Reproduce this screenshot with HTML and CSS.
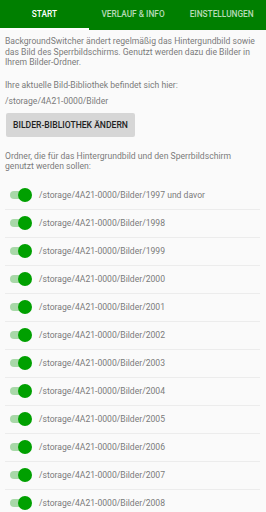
FILE: index.html
```html
<!DOCTYPE html>
<html lang="de">

<head>
    <meta charset="UTF-8" />
    <meta name="viewport" content="width=device-width, initial-scale=1.0" />
    <title>BackgroundSwitcher</title>
    <link rel="stylesheet" href="styles.css">
</head>

<body>
    <div class="tabs">
        <div class="tab activo">Start</div>
        <div class="tab">Verlauf &amp; Info</div>
        <div class="tab">Einstellungen</div>
    </div>
    <div class="contenido">
        <p class="texto">BackgroundSwitcher ändert regelmäßig das Hintergundbild sowie das Bild des Sperrbildschirms. Genutzt werden dazu die Bilder in Ihrem Bilder-Ordner.</p>
        <p class="texto aktuell">Ihre aktuelle Bild-Bibliothek befindet sich hier:</p>
        <p class="texto ruta">/storage/4A21-0000/Bilder</p>
        <button class="boton">Bilder-Bibliothek ändern</button>
        <p class="texto ordner">Ordner, die für das Hintergrundbild und den Sperrbildschirm genutzt werden sollen:</p>
        <ul class="lista">
            <li class="fila"><span class="switch"></span>/storage/4A21-0000/Bilder/1997 und davor</li>
            <li class="fila"><span class="switch"></span>/storage/4A21-0000/Bilder/1998</li>
            <li class="fila"><span class="switch"></span>/storage/4A21-0000/Bilder/1999</li>
            <li class="fila"><span class="switch"></span>/storage/4A21-0000/Bilder/2000</li>
            <li class="fila"><span class="switch"></span>/storage/4A21-0000/Bilder/2001</li>
            <li class="fila"><span class="switch"></span>/storage/4A21-0000/Bilder/2002</li>
            <li class="fila"><span class="switch"></span>/storage/4A21-0000/Bilder/2003</li>
            <li class="fila"><span class="switch"></span>/storage/4A21-0000/Bilder/2004</li>
            <li class="fila"><span class="switch"></span>/storage/4A21-0000/Bilder/2005</li>
            <li class="fila"><span class="switch"></span>/storage/4A21-0000/Bilder/2006</li>
            <li class="fila"><span class="switch"></span>/storage/4A21-0000/Bilder/2007</li>
            <li class="fila"><span class="switch"></span>/storage/4A21-0000/Bilder/2008</li>
        </ul>
    </div>
</body>

</html>
```

FILE: styles.css
```css
* {
    box-sizing: border-box;
    margin: 0;
    padding: 0;
}

body {
    background-color: #fafafa;
    font-family: Roboto, "Liberation Sans", sans-serif;
    color: #7a7a7a;
    overflow: hidden;
}

.tabs {
    display: flex;
    background-color: #007f00;
    height: 30px;
}

.tab {
    flex: 1;
    text-align: center;
    color: rgba(255, 255, 255, 0.72);
    font-size: 8.3px;
    font-weight: 500;
    text-transform: uppercase;
    line-height: 29px;
    border-bottom: 2px solid transparent;
}

.tab.activo {
    color: white;
    border-bottom-color: white;
}

.contenido {
    padding: 6px 6px 0 5px;
}

.texto {
    font-size: 8.6px;
    line-height: 10.5px;
}

.aktuell {
    margin-top: 12px;
}

.ruta {
    margin-top: 6px;
}

.boton {
    display: block;
    margin: 6px 0 0 1px;
    width: 129px;
    height: 24px;
    border: none;
    border-radius: 2px;
    background-color: #d6d6d6;
    color: #222;
    font-family: Roboto, "Liberation Sans", sans-serif;
    font-size: 8.6px;
    font-weight: 500;
    text-transform: uppercase;
}

.ordner {
    margin-top: 14px;
}

.lista {
    list-style: none;
    margin-top: 10px;
}

.fila {
    display: flex;
    align-items: center;
    height: 28px;
    font-size: 8.6px;
    border-bottom: 1px solid #ececec;
}

.switch {
    position: relative;
    width: 19px;
    height: 8px;
    margin: 0 10px 0 5px;
    border-radius: 4px;
    background-color: #a8d8a8;
}

.switch::after {
    content: "";
    position: absolute;
    right: -3px;
    top: -3px;
    width: 14px;
    height: 14px;
    border-radius: 50%;
    background-color: #00a000;
}
```
